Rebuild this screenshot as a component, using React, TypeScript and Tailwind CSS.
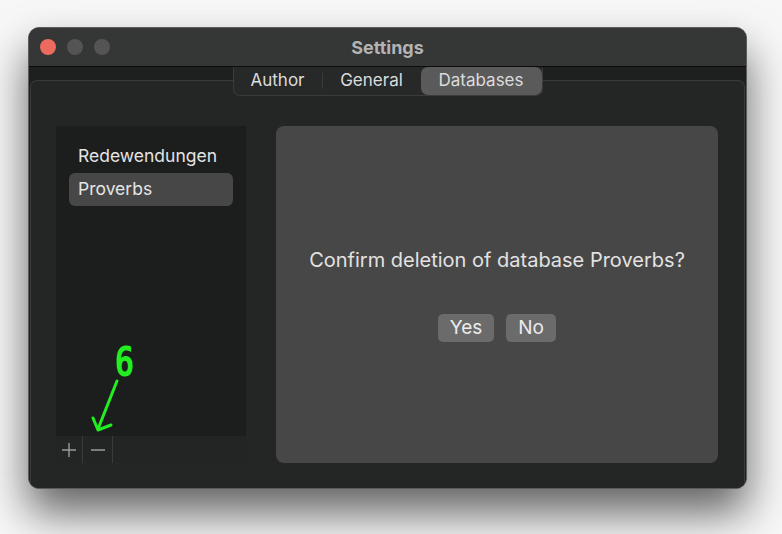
import React from "react";

export default function App() {
  const font = { fontFamily: 'Inter, "Noto Sans", "Liberation Sans", sans-serif' };
  return (
    <div
      className="w-[782px] h-[534px] bg-[#f7f7f7] pt-[27px] pl-[28px] relative overflow-hidden"
      style={font}
    >
      <div className="w-[719px] h-[462px] rounded-[11px] border border-[#5c5c5c] bg-[#1f2020] flex flex-col overflow-hidden shadow-[0_24px_44px_rgba(0,0,0,0.6)]">
        {/* title bar */}
        <div className="h-[39px] shrink-0 bg-[#353636] border-b border-[#0d0d0d] relative flex items-center">
          <div className="flex items-center gap-[11px] pl-[11px]">
            <span className="w-[16px] h-[16px] rounded-full bg-[#ed6a5e]" />
            <span className="w-[16px] h-[16px] rounded-full bg-[#545454]" />
            <span className="w-[16px] h-[16px] rounded-full bg-[#545454]" />
          </div>
          <div className="absolute inset-0 flex items-center justify-center text-[18px] font-bold text-[#b3b3b3]">
            Settings
          </div>
        </div>
        {/* content */}
        <div className="flex-1 relative pt-[13px] px-[1px] flex flex-col bg-[#1e1f1f]">
          <div className="flex-1 border-t border-x border-[#3a3b3b] rounded-t-[7px] bg-[#242525] pt-[45px] pl-[25px] pr-[26px] pb-[25px] flex gap-[30px]">
            {/* list */}
            <div className="w-[190px] bg-[#1c1d1d] flex flex-col">
              <div className="flex-1 pt-[14px] px-[13px] text-[17.5px] text-[#e4e4e4]">
                <div className="h-[33px] flex items-center pl-[9px]">Redewendungen</div>
                <div className="h-[33px] flex items-center pl-[9px] rounded-[6px] bg-[#474747]">Proverbs</div>
              </div>
              <div className="h-[27px] bg-[#232424] flex items-stretch text-[#9b9b9b]">
                <div className="w-[27px] flex items-center justify-center border-r border-[#3a3a3a]">
                  <svg width="14" height="14" viewBox="0 0 14 14">
                    <path d="M7 0v14M0 7h14" stroke="#9b9b9b" strokeWidth="1.4" />
                  </svg>
                </div>
                <div className="w-[30px] flex items-center justify-center border-r border-[#3a3a3a]">
                  <svg width="14" height="14" viewBox="0 0 14 14">
                    <path d="M0 7h14" stroke="#9b9b9b" strokeWidth="1.4" />
                  </svg>
                </div>
              </div>
            </div>
            {/* right panel */}
            <div className="flex-1 bg-[#474747] rounded-[8px] flex flex-col items-center pt-[120px]">
              <div className="text-[20px] text-[#e2e2e2] leading-[28px]">
                Confirm deletion of database Proverbs?
              </div>
              <div className="flex gap-[12px] mt-[40px]">
                <div className="h-[28px] w-[56px] rounded-[5px] bg-[#6b6b6b] flex items-center justify-center text-[19px] text-[#ececec]">
                  Yes
                </div>
                <div className="h-[28px] w-[50px] rounded-[5px] bg-[#6b6b6b] flex items-center justify-center text-[19px] text-[#ececec]">
                  No
                </div>
              </div>
            </div>
          </div>
          {/* tabs */}
          <div className="absolute top-0 left-1/2 -translate-x-1/2 w-[310px] h-[29px] rounded-b-[7px] rounded-t-[2px] bg-[#272828] border border-[#3a3b3b] border-t-0 flex items-center text-[17px] text-[#dcdcdc]">
            <div className="w-[88px] h-full flex items-center justify-center">Author</div>
            <div className="w-px h-[16px] bg-[#3c3c3c]" />
            <div className="w-[98px] h-full flex items-center justify-center">General</div>
            <div className="flex-1 h-full flex items-center justify-center rounded-[7px] bg-[#5a5a5a]">Databases</div>
          </div>
        </div>
      </div>
      {/* annotation */}
      <div className="absolute left-[112px] top-[338px] text-[41px] font-bold text-[#22ee22] leading-[48px] scale-x-[0.8]" style={{ fontFamily: '"DejaVu Sans Mono", monospace' }}>
        6
      </div>
      <svg className="absolute left-0 top-0" width="782" height="534" style={{ pointerEvents: "none" }}>
        <path d="M117 381 L98 429 M93 418 L98 430 L111 425" stroke="#22ee22" strokeWidth="3" fill="none" strokeLinecap="round" strokeLinejoin="round" />
      </svg>
    </div>
  );
}
